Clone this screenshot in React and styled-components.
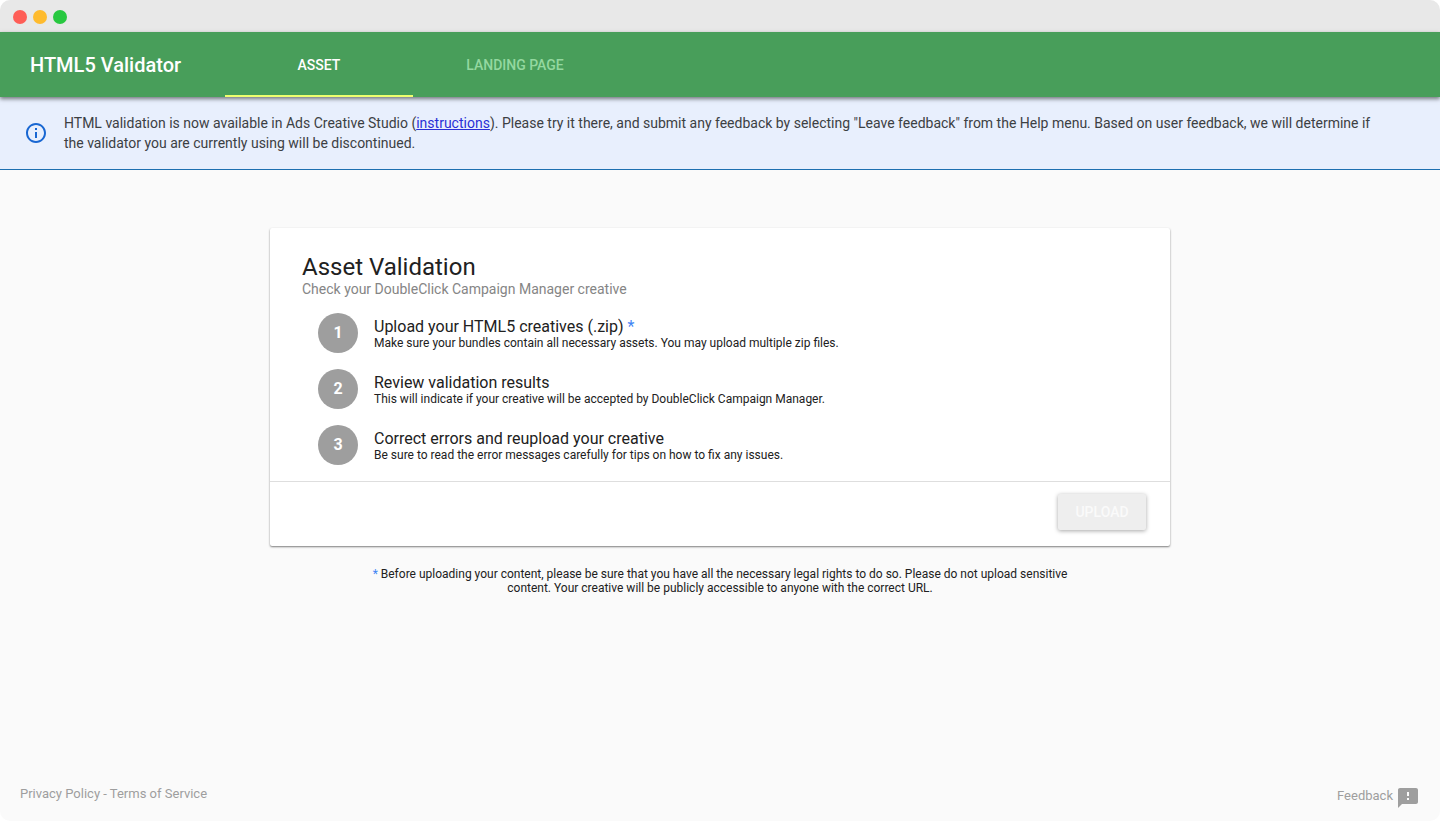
import React, { useState } from "react";
import styled, { createGlobalStyle, ThemeProvider } from "styled-components";

const theme = {
  colors: {
    green: "#489e5a",
    greenLight: "#94d8a0",
    yellow: "#eeff6e",
    page: "#fafafa",
    chrome: "#e8e8e8",
    info: "#e8effd",
    infoLine: "#1d6fb0",
    blue: "#1967d2",
    text: "#212121",
    muted: "#858585",
    footer: "#9e9e9e",
  },
};

const tabs = ["Asset", "Landing Page"];

const steps = [
  {
    title: "Upload your HTML5 creatives (.zip)",
    text: "Make sure your bundles contain all necessary assets. You may upload multiple zip files.",
    required: true,
  },
  {
    title: "Review validation results",
    text: "This will indicate if your creative will be accepted by DoubleClick Campaign Manager.",
  },
  {
    title: "Correct errors and reupload your creative",
    text: "Be sure to read the error messages carefully for tips on how to fix any issues.",
  },
];

const InfoIcon = () => (
  <svg width="24" height="24" viewBox="0 0 24 24" fill="currentColor" aria-hidden="true">
    <path d="M11 7h2v2h-2zm0 4h2v6h-2zm1-9C6.48 2 2 6.48 2 12s4.48 10 10 10 10-4.48 10-10S17.52 2 12 2zm0 18c-4.41 0-8-3.59-8-8s3.59-8 8-8 8 3.59 8 8-3.59 8-8 8z" />
  </svg>
);

const FeedbackIcon = () => (
  <svg width="24" height="24" viewBox="0 0 24 24" fill="currentColor" aria-hidden="true">
    <path d="M20 2H4c-1.1 0-1.99.9-1.99 2L2 22l4-4h14c1.1 0 2-.9 2-2V4c0-1.1-.9-2-2-2zm-7 12h-2v-2h2v2zm0-4h-2V6h2v4z" />
  </svg>
);

const App = () => {
  const [active, setActive] = useState(0);

  return (
    <ThemeProvider theme={theme}>
      <GlobalStyle />
      <Window>
        <TitleBar>
          <Dot $color="#fe5e57" />
          <Dot $color="#febb2e" />
          <Dot $color="#28c840" />
        </TitleBar>
        <Header>
          <Brand>HTML5 Validator</Brand>
          <Tabs>
            {tabs.map((tab, i) => (
              <Tab key={tab} type="button" $active={i === active} onClick={() => setActive(i)}>
                {tab}
              </Tab>
            ))}
          </Tabs>
        </Header>
        <Banner>
          <BannerIcon>
            <InfoIcon />
          </BannerIcon>
          <BannerText>
            HTML validation is now available in Ads Creative Studio (
            <BannerLink href="#instructions">instructions</BannerLink>). Please try it there, and
            submit any feedback by selecting "Leave feedback" from the Help menu. Based on user
            feedback, we will determine if the validator you are currently using will be
            discontinued.
          </BannerText>
        </Banner>
        <Main>
          <Card>
            <CardBody>
              <Title>Asset Validation</Title>
              <Subtitle>Check your DoubleClick Campaign Manager creative</Subtitle>
              <Steps>
                {steps.map((step, i) => (
                  <Step key={step.title}>
                    <StepNumber>{i + 1}</StepNumber>
                    <StepContent>
                      <StepTitle>
                        {step.title} {step.required && <Star>*</Star>}
                      </StepTitle>
                      <StepText>{step.text}</StepText>
                    </StepContent>
                  </Step>
                ))}
              </Steps>
            </CardBody>
            <CardActions>
              <UploadButton type="button" disabled>
                Upload
              </UploadButton>
            </CardActions>
          </Card>
          <Note>
            <Star>*</Star> Before uploading your content, please be sure that you have all the
            necessary legal rights to do so. Please do not upload sensitive content. Your creative
            will be publicly accessible to anyone with the correct URL.
          </Note>
        </Main>
        <Footer>
          <FooterLinks>
            <FooterLink href="#privacy">Privacy Policy</FooterLink> -{" "}
            <FooterLink href="#terms">Terms of Service</FooterLink>
          </FooterLinks>
          <Feedback type="button">
            Feedback
            <FeedbackIcon />
          </Feedback>
        </Footer>
      </Window>
    </ThemeProvider>
  );
};

export default App;

const GlobalStyle = createGlobalStyle`
  * {
    box-sizing: border-box;
  }

  body {
    margin: 0;
    background: #fff;
    color: ${theme.colors.text};
    font-family: Roboto, "Liberation Sans", sans-serif;
  }

  button {
    font-family: inherit;
    border: 0;
    padding: 0;
    background: none;
    cursor: pointer;
  }
`;

const Window = styled.div`
  min-height: 100vh;
  display: flex;
  flex-direction: column;
  overflow: hidden;
  border-radius: 10px;
  background: ${({ theme: { colors } }) => colors.page};
`;

const TitleBar = styled.div`
  height: 32px;
  display: flex;
  align-items: center;
  gap: 6px;
  padding: 2px 13px 0;
  background: ${({ theme: { colors } }) => colors.chrome};
`;

const Dot = styled.span`
  width: 14px;
  height: 14px;
  border-radius: 50%;
  background: ${({ $color }) => $color};
`;

const Header = styled.header`
  position: relative;
  height: 65px;
  display: flex;
  background: ${({ theme: { colors } }) => colors.green};
  box-shadow: 0 2px 4px rgba(0, 0, 0, 0.5);
`;

const Brand = styled.h1`
  margin: 0;
  width: 225px;
  padding-left: 30px;
  font-size: 20px;
  font-weight: 500;
  line-height: 66px;
  color: #fff;
`;

const Tabs = styled.nav`
  display: flex;
  gap: 8px;
`;

const Tab = styled.button`
  width: 188px;
  padding-top: 3px;
  border-bottom: 2px solid
    ${({ $active, theme: { colors } }) => ($active ? colors.yellow : "transparent")};
  font-size: 14px;
  font-weight: 500;
  text-transform: uppercase;
  color: ${({ $active, theme: { colors } }) => ($active ? "#fff" : colors.greenLight)};
`;

const Banner = styled.section`
  display: flex;
  align-items: center;
  gap: 16px;
  padding: 16px 56px 16px 24px;
  border-bottom: 1px solid ${({ theme: { colors } }) => colors.infoLine};
  background: ${({ theme: { colors } }) => colors.info};
`;

const BannerIcon = styled.div`
  display: flex;
  color: ${({ theme: { colors } }) => colors.blue};
`;

const BannerText = styled.p`
  margin: 0;
  font-size: 14px;
  line-height: 20px;
  color: #3c4043;
`;

const BannerLink = styled.a`
  color: #2a2fd6;
`;

const Main = styled.main`
  flex: 1;
  display: flex;
  flex-direction: column;
  align-items: center;
  padding: 58px 24px 24px;
`;

const Card = styled.section`
  width: 100%;
  max-width: 900px;
  border-radius: 2px;
  background: #fff;
  box-shadow: 0 1px 2px rgba(0, 0, 0, 0.5);
`;

const CardBody = styled.div`
  padding: 24px 32px 16px;
`;

const Title = styled.h2`
  margin: 0;
  font-size: 24px;
  font-weight: 400;
  line-height: 30px;
`;

const Subtitle = styled.p`
  margin: 0;
  font-size: 14px;
  line-height: 14px;
  color: ${({ theme: { colors } }) => colors.muted};
`;

const Steps = styled.ol`
  display: flex;
  flex-direction: column;
  gap: 16px;
  margin: 0;
  padding: 17px 16px 0;
  list-style: none;
`;

const Step = styled.li`
  display: flex;
  align-items: center;
  gap: 16px;
`;

const StepNumber = styled.div`
  width: 40px;
  height: 40px;
  flex-shrink: 0;
  border-radius: 50%;
  background: #9e9e9e;
  color: #fff;
  font-size: 16px;
  font-weight: 700;
  line-height: 40px;
  text-align: center;
`;

const StepContent = styled.div`
  padding-top: 2px;
`;

const StepTitle = styled.h3`
  margin: 0;
  font-size: 16px;
  font-weight: 400;
  line-height: 18px;
`;

const StepText = styled.p`
  margin: 0;
  font-size: 12px;
  line-height: 14px;
`;

const Star = styled.span`
  color: #4285f4;
`;

const CardActions = styled.div`
  display: flex;
  justify-content: flex-end;
  padding: 12px 24px 16px;
  border-top: 1px solid #dedede;
`;

const UploadButton = styled.button`
  width: 88px;
  height: 36px;
  border-radius: 2px;
  background: #eee;
  box-shadow: 0 1px 4px rgba(0, 0, 0, 0.35);
  font-size: 14px;
  font-weight: 500;
  text-transform: uppercase;
  color: #fafafa;
`;

const Note = styled.p`
  width: 100%;
  max-width: 736px;
  margin: 21px 0 0;
  font-size: 12px;
  line-height: 14px;
  text-align: center;
`;

const Footer = styled.footer`
  display: flex;
  justify-content: space-between;
  align-items: flex-start;
  padding: 0 20px 11px;
  font-size: 13px;
  color: ${({ theme: { colors } }) => colors.footer};
`;

const FooterLinks = styled.div`
  line-height: 16px;
`;

const FooterLink = styled.a`
  color: inherit;
  text-decoration: none;
`;

const Feedback = styled.button`
  display: flex;
  align-items: flex-start;
  gap: 3px;
  font-size: 13px;
  line-height: 20px;
  color: inherit;
`;
